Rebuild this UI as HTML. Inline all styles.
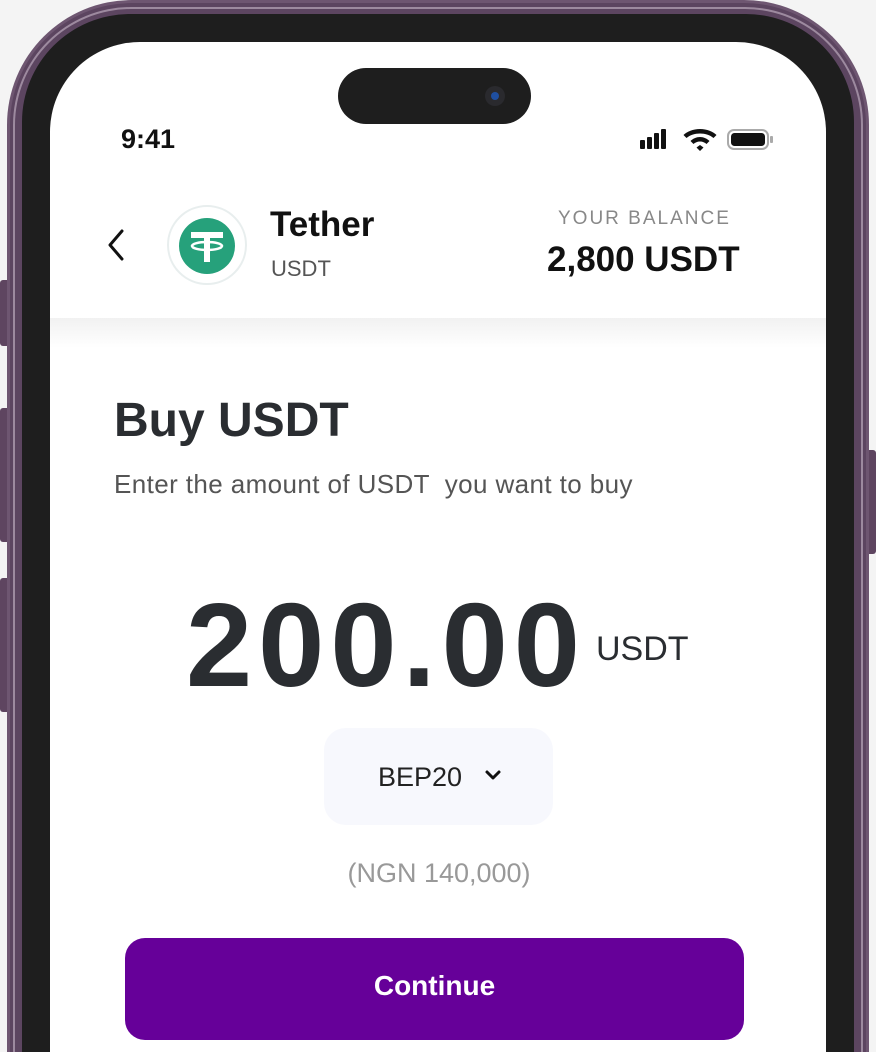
<!DOCTYPE html>
<html style="height:1052px;overflow:hidden"><head><style>
*{margin:0;padding:0;box-sizing:border-box}
body{width:876px;height:1052px;overflow:hidden;background:#f4f4f4;position:relative;font-family:"Liberation Sans",sans-serif}
.abs{position:absolute}
.btn{position:absolute;background:#5e4560;border-radius:3px}
</style></head><body>
<div class="btn" style="left:0;top:280px;width:10px;height:66px"></div>
<div class="btn" style="left:0;top:408px;width:10px;height:134px"></div>
<div class="btn" style="left:0;top:578px;width:10px;height:134px"></div>
<div class="btn" style="left:864px;top:450px;width:12px;height:104px"></div>
<div class="abs" style="left:7px;top:0;width:862px;height:1052px;border-radius:125px 125px 0 0;background:#5c4560;border:3px solid #6e5671;border-bottom:none"></div>
<div class="abs" style="left:13px;top:7px;width:850px;height:1045px;border-radius:118px 118px 0 0;border:2px solid #9d8a9f;border-bottom:none"></div>
<div class="abs" style="left:22px;top:14px;width:832px;height:1038px;border-radius:108px 108px 0 0;background:#1e1e1e"></div>
<div class="abs" style="left:50px;top:42px;width:776px;height:1010px;border-radius:90px 90px 0 0;background:#fff;overflow:hidden">
  <div class="abs" style="left:0;top:276px;width:776px;height:30px;background:linear-gradient(#f1f1f1,#fff)"></div>
</div>
<div class="abs" style="left:338px;top:68px;width:193px;height:56px;border-radius:28px;background:#1e1e1e"></div>
<div class="abs" style="left:485px;top:86px;width:20px;height:20px;border-radius:50%;background:#2a2a2e"><div class="abs" style="left:6px;top:6px;width:8px;height:8px;border-radius:50%;background:#1f4fa0"></div></div>
<div class="abs" style="left:121px;top:124px;font-size:27px;font-weight:bold;color:#111">9:41</div>
<svg class="abs" style="left:640px;top:128px" width="136" height="24" viewBox="0 0 136 24">
<rect x="0" y="12" width="5" height="9" rx="1" fill="#111"/><rect x="7" y="9" width="5" height="12" rx="1" fill="#111"/><rect x="14" y="5" width="5" height="16" rx="1" fill="#111"/><rect x="21" y="1" width="5" height="20" rx="1" fill="#111"/>
<g transform="translate(14,0)"><path d="M46 1 C39 1 33 3.5 29.5 7 L32.5 10 C36 7 41 5.5 46 5.5 C51 5.5 56 7 59.5 10 L62.5 7 C59 3.5 53 1 46 1Z M46 9 C42.5 9 39 10.5 36.5 13 L39.5 16 C41 14.5 43.5 13.5 46 13.5 C48.5 13.5 51 14.5 52.5 16 L55.5 13 C53 10.5 49.5 9 46 9Z M46 17 L42.5 19.5 L46 23 L49.5 19.5Z" fill="#111"/></g>
<rect x="88" y="2" width="40" height="19" rx="6" fill="none" stroke="#aaa" stroke-width="2"/><rect x="91" y="5" width="34" height="13" rx="3.5" fill="#111"/><rect x="130" y="8" width="3" height="7" rx="1" fill="#aaa"/></svg>
<svg class="abs" style="left:104px;top:229px" width="24" height="32"><path d="M18 2 L6 16 L18 30" fill="none" stroke="#111" stroke-width="3" stroke-linecap="round" stroke-linejoin="round"/></svg>
<div class="abs" style="left:167px;top:205px;width:80px;height:80px;border-radius:50%;border:2px solid #e8eeee;background:#fff"></div>
<svg class="abs" style="left:178px;top:217px" width="58" height="58" viewBox="0 0 58 58"><circle cx="29" cy="29" r="28" fill="#26a17b"/><rect x="13" y="15" width="32" height="6" fill="#fff"/><rect x="26" y="15" width="6" height="30" fill="#fff"/><ellipse cx="29" cy="29" rx="15" ry="4" fill="none" stroke="#fff" stroke-width="2.5"/></svg>
<div class="abs" style="left:270px;top:205px;font-size:35px;font-weight:bold;color:#111">Tether</div>
<div class="abs" style="left:271px;top:256px;font-size:22px;color:#555">USDT</div>
<div class="abs" style="left:558px;top:208px;font-size:19px;color:#888;letter-spacing:2px">YOUR BALANCE</div>
<div class="abs" style="left:547px;top:240px;font-size:35px;font-weight:bold;color:#111">2,800 USDT</div>
<div class="abs" style="left:114px;top:393px;font-size:48px;font-weight:bold;color:#2a2d31">Buy USDT</div>
<div class="abs" style="left:114px;top:469px;font-size:26px;color:#555;letter-spacing:0.4px">Enter the amount of USDT &nbsp;you want to buy</div>
<div class="abs" style="left:186px;top:577px;font-size:119px;font-weight:bold;color:#2a2d31;letter-spacing:6px">200.00</div>
<div class="abs" style="left:596px;top:630px;font-size:34px;color:#2a2d31">USDT</div>
<div class="abs" style="left:324px;top:728px;width:229px;height:97px;border-radius:22px;background:#f7f8fd"></div>
<div class="abs" style="left:378px;top:762px;font-size:27px;color:#222">BEP20</div>
<svg class="abs" style="left:484px;top:768px" width="18" height="14"><path d="M3 4 L9 10 L15 4" fill="none" stroke="#111" stroke-width="3" stroke-linecap="round" stroke-linejoin="round"/></svg>
<div class="abs" style="left:0;width:876px;top:858px;text-align:center;font-size:27px;color:#999;padding-left:2px">(NGN 140,000)</div>
<div class="abs" style="left:125px;top:938px;width:619px;height:102px;border-radius:20px;background:#660099"></div>
<div class="abs" style="left:125px;width:619px;top:970px;text-align:center;font-size:28px;font-weight:bold;color:#fff">Continue</div>
</body></html>
